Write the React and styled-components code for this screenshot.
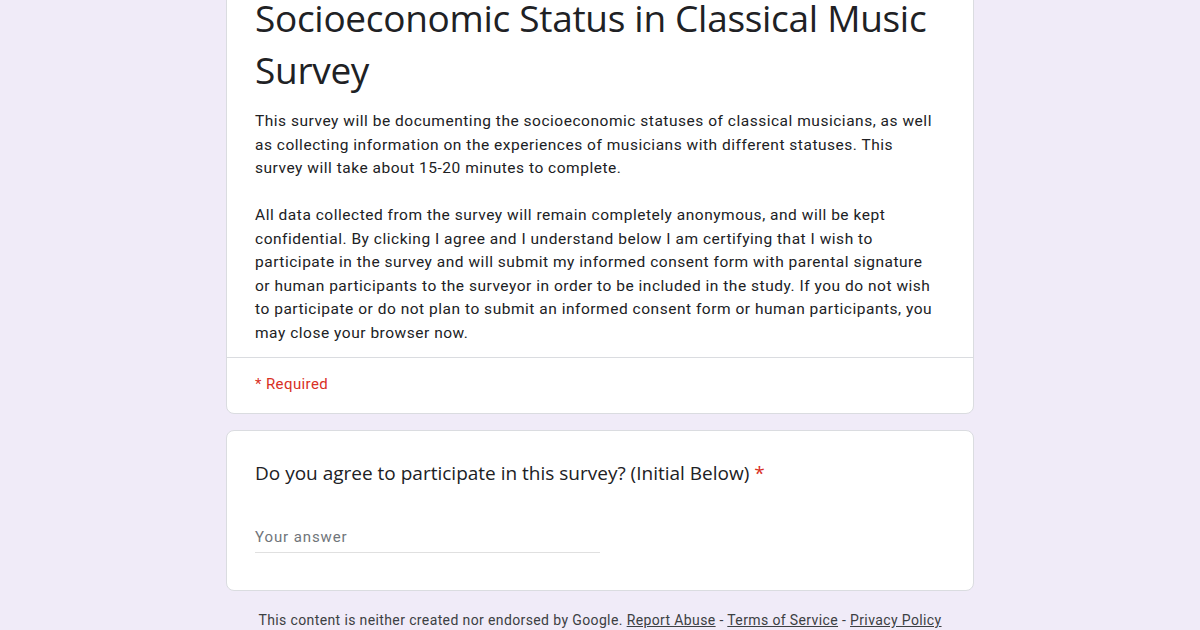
import React from "react";
import styled, { createGlobalStyle } from "styled-components";

const Global = createGlobalStyle`
  html, body {
    margin: 0;
    padding: 0;
    background: #f0ebf8;
    font-family: Roboto, "Liberation Sans", sans-serif;
    color: #202124;
  }
`;

const Page = styled.div`
  display: flex;
  flex-direction: column;
  align-items: center;
  margin-top: -31px;
`;

const Card = styled.div`
  width: 748px;
  box-sizing: border-box;
  background: #fff;
  border: 1px solid #dadce0;
  border-radius: 8px;
  margin-bottom: 16px;
`;

const CardBody = styled.div`
  padding: ${p => p.pad || "22px 28px 12px"};
`;

const Title = styled.div`
  font-family: "Open Sans", Roboto, sans-serif;
  font-size: 37px;
  line-height: 52px;
  letter-spacing: -0.3px;
  color: #202124;
`;

const Desc = styled.div`
  margin-top: 14px;
  max-width: 686px;
  font-size: 15.5px;
  line-height: 23.5px;
  letter-spacing: 0.52px;
  color: #202124;
  white-space: pre-wrap;
`;

const Divider = styled.div`
  height: 1px;
  background: #dadce0;
`;

const Required = styled.div`
  padding: 17px 28px 20px;
  font-size: 15px;
  letter-spacing: 0.4px;
  color: #d93025;
`;

const Question = styled.div`
  font-family: "Open Sans", Roboto, sans-serif;
  font-size: 19px;
  color: #202124;
  span { color: #d93025; }
`;

const Answer = styled.div`
  margin-top: 42px;
  width: 345px;
  padding-bottom: 6px;
  border-bottom: 1px solid #e0e0e0;
  font-size: 15px;
  color: #70757a;
  letter-spacing: 0.9px;
`;

const Footer = styled.div`
  font-size: 14px;
  letter-spacing: 0.38px;
  color: #3c4043;
  padding-top: 5px;
  a { color: #3c4043; text-decoration: underline; }
`;

export default function App() {
  return (
    <Page>
      <Global />
      <Card>
        <CardBody pad="22px 28px 12px">
          <Title>Socioeconomic Status in Classical Music Survey</Title>
          <Desc>
            {"This survey will be documenting the socioeconomic statuses of classical musicians, as well as collecting information on the experiences of musicians with different statuses. This survey will take about 15-20 minutes to complete.\n\nAll data collected from the survey will remain completely anonymous, and will be kept confidential. By clicking I agree and I understand below I am certifying that I wish to participate in the survey and will submit my informed consent form with parental signature or human participants to the surveyor in order to be included in the study. If you do not wish to participate or do not plan to submit an informed consent form or human participants, you may close your browser now."}
          </Desc>
        </CardBody>
        <Divider />
        <Required>* Required</Required>
      </Card>
      <Card>
        <CardBody pad="29px 28px 37px">
          <Question>Do you agree to participate in this survey? (Initial Below) <span>*</span></Question>
          <Answer>Your answer</Answer>
        </CardBody>
      </Card>
      <Footer>
        This content is neither created nor endorsed by Google. <a href="#">Report Abuse</a> - <a href="#">Terms of Service</a> - <a href="#">Privacy Policy</a>
      </Footer>
    </Page>
  );
}
